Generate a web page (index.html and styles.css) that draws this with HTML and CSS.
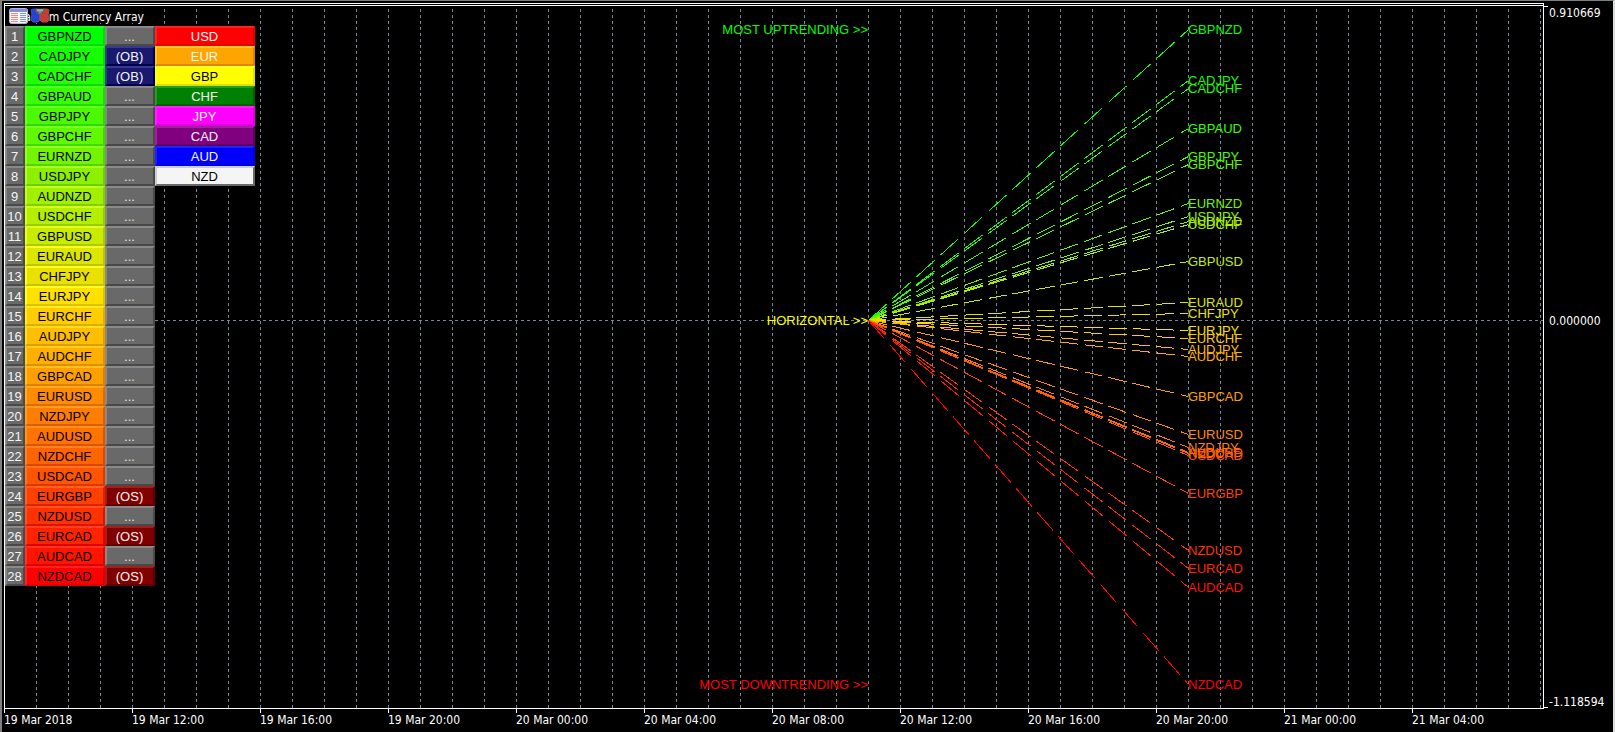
FILE: index.html
```html
<!DOCTYPE html>
<html lang="en">
<head>
    <meta charset="UTF-8">
    <meta name="viewport" content="width=device-width, initial-scale=1.0">
    <title>Quantum Currency Array</title>
    <link rel="stylesheet" href="styles.css">
</head>
<body>
    <main class="plot">
        <svg id="chart" class="chart"></svg>

        <div class="panel">
            <div class="title-bar">
                <h1>Quantum Currency Array</h1>
                <svg class="icon icon-list" width="19" height="16" viewBox="0 0 19 16">
                    <rect x="0.5" y="0.5" width="18" height="15" rx="2" fill="#f4f4fa" stroke="#b4b4cc"/>
                    <rect x="1" y="1" width="17" height="3" fill="#7f8fdc"/>
                    <path d="M2 5.5h7M2 7.5h7M2 9.5h7M2 11.5h7M2 13.5h7" stroke="#f08a78"/>
                    <path d="M11 5.5h6M11 7.5h6M11 9.5h6M11 11.5h6M11 13.5h6" stroke="#7f95ea"/>
                </svg>
                <svg class="icon icon-link" width="20" height="16" viewBox="0 0 20 16">
                    <path d="M1 2l2-1h4v5h3v6l-2 2H3l-2-2 1-5z" fill="#2741d8" stroke="#3c55c8"/>
                    <path d="M19 2l-2-1h-4v5h-3v6l2 2h5l2-2-1-5z" fill="#c83c32" stroke="#b84a42"/>
                    <path d="M6 1h8v3h-2v2H8V4H6z" fill="#8c8c8c" stroke="#5c5c5c"/>
                    <path d="M7 2h6" stroke="#c8c8c8"/>
                </svg>
            </div>
            <div class="columns">
                <div id="pairs" class="pairs"></div>
                <div id="currencies" class="currencies"></div>
            </div>
        </div>
    </main>

    <aside class="price-axis">
        <span>0.910669</span>
        <span>0.000000</span>
        <span>-1.118594</span>
    </aside>

    <footer class="time-axis">
        <span>19 Mar 2018</span>
        <span>19 Mar 12:00</span>
        <span>19 Mar 16:00</span>
        <span>19 Mar 20:00</span>
        <span>20 Mar 00:00</span>
        <span>20 Mar 04:00</span>
        <span>20 Mar 08:00</span>
        <span>20 Mar 12:00</span>
        <span>20 Mar 16:00</span>
        <span>20 Mar 20:00</span>
        <span>21 Mar 00:00</span>
        <span>21 Mar 04:00</span>
    </footer>

    <script src="script.js"></script>
</body>
</html>
```

FILE: styles.css
```css
* {
    box-sizing: border-box;
}

body {
    display: grid;
    grid-template-columns: 1fr 69px;
    grid-template-rows: 1fr 23px;
    min-height: 100vh;
    margin: 0;
    padding: 2px 0 0 2px;
    border: 0 solid #808080;
    border-width: 1px 2px 0 2px;
    border-right-color: #dcdcdc;
    background-color: black;
    color: white;
    font-family: "DejaVu Sans Condensed", "DejaVu Sans", sans-serif;
    font-size: 12px;
}

.plot {
    position: relative;
    min-height: 590px;
    border: 1px solid white;
    border-top: 3px double white;
}

.chart {
    position: absolute;
    width: 100%;
    height: 100%;
    font-family: "Liberation Sans", Arial, sans-serif;
    font-size: 13px;
}

.grid-line {
    stroke: #778899;
    stroke-dasharray: 3 3;
    shape-rendering: crispEdges;
}

.trend-line {
    shape-rendering: crispEdges;
}

.note {
    text-anchor: end;
}

/* button panel, drawn over the chart */
.panel {
    position: relative;
    width: 250px;
}

.title-bar {
    width: 150px;
    height: 17px;
    margin-bottom: 3px;
    background-color: black;
}

h1 {
    margin: 0;
    padding: 3px 0 0 4px;
    font-size: 12px;
    font-weight: normal;
    line-height: 17px;
    white-space: nowrap;
}

.icon {
    position: absolute;
    top: 2px;
}

.icon-list {
    left: 4px;
}

.icon-link {
    left: 25px;
}

.columns {
    display: flex;
    align-items: flex-start;
}

.pairs {
    display: grid;
    grid-template-columns: 20px 80px 50px;
}

.currencies {
    display: grid;
    width: 100px;
}

button {
    height: 20px;
    margin: 0;
    padding: 2px 1px 0 0;
    border: 2px solid;
    border-radius: 0;
    font-family: "Liberation Sans", Arial, sans-serif;
    font-size: 13px;
    line-height: 14px;
    text-align: center;
}

/* axes */
.price-axis {
    display: grid;
    grid-template-rows: 14px 4fr 14px 5fr 14px;
    margin-top: 3px;
    padding-left: 5px;
    line-height: 14px;
    background: linear-gradient(white, white) 0 0 / 4px 1px no-repeat,
                linear-gradient(white, white) 0 calc(100% - 1px) / 4px 1px no-repeat;
}

.price-axis span:nth-child(2) {
    grid-row: 3;
}

.price-axis span:nth-child(3) {
    grid-row: 5;
}

.time-axis {
    display: flex;
    grid-column: 1 / 3;
    overflow: hidden;
}

.time-axis span {
    flex: 0 0 128px;
    line-height: 22px;
    background: linear-gradient(white, white) 0 0 / 1px 4px no-repeat;
}
```

FILE: script.js
```js
const MAX = 0.910669;
const MIN = -1.118594;
const BAR = 32;
const START_BAR = 27;
const END_BAR = 37;

// pair, value, colour, state
const pairs = [
    ["GBPNZD", 0.842, "#00ff00", ""],
    ["CADJPY", 0.695, "#14ff00", "OB"],
    ["CADCHF", 0.672, "#23ff00", "OB"],
    ["GBPAUD", 0.556, "#37ff00", ""],
    ["GBPJPY", 0.475, "#4bfa00", ""],
    ["GBPCHF", 0.452, "#5ffa00", ""],
    ["EURNZD", 0.339, "#73f500", ""],
    ["USDJPY", 0.301, "#8cf000", ""],
    ["AUDNZD", 0.287, "#a0f000", ""],
    ["USDCHF", 0.278, "#b4ee00", ""],
    ["GBPUSD", 0.171, "#c8eb00", ""],
    ["EURAUD", 0.052, "#dce600", ""],
    ["CHFJPY", 0.020, "#ebe100", ""],
    ["EURJPY", -0.029, "#ffe100", ""],
    ["EURCHF", -0.052, "#ffcd00", ""],
    ["AUDJPY", -0.084, "#ffbe00", ""],
    ["AUDCHF", -0.105, "#ffaf00", ""],
    ["GBPCAD", -0.220, "#ffa000", ""],
    ["EURUSD", -0.330, "#ff8c00", ""],
    ["NZDJPY", -0.368, "#ff7d00", ""],
    ["AUDUSD", -0.382, "#ff7300", ""],
    ["NZDCHF", -0.385, "#ff6400", ""],
    ["USDCAD", -0.391, "#ff5500", ""],
    ["EURGBP", -0.501, "#ff4100", "OS"],
    ["NZDUSD", -0.666, "#ff3200", ""],
    ["EURCAD", -0.718, "#ff2300", "OS"],
    ["AUDCAD", -0.773, "#ff1400", ""],
    ["NZDCAD", -1.054, "#ff0000", "OS"]
];

const currencies = [
    ["USD", "#ff0000", "#f5f5f5"],
    ["EUR", "#ffa500", "#f5f5f5"],
    ["GBP", "#ffff00", "#000000"],
    ["CHF", "#008000", "#f5f5f5"],
    ["JPY", "#ff00ff", "#f5f5f5"],
    ["CAD", "#800080", "#f5f5f5"],
    ["AUD", "#0000ff", "#f5f5f5"],
    ["NZD", "#f5f5f5", "#000000"]
];

function shade(hex, amount) {
    const parts = [1, 3, 5].map(i => parseInt(hex.substr(i, 2), 16) + amount);
    return "rgb(" + parts.map(p => Math.max(0, Math.min(255, p))).join(",") + ")";
}

function addButton(parent, text, back, color) {
    const button = document.createElement("button");
    let light = shade(back, 32);
    let dark = shade(back, -32);
    if (back === "#f5f5f5") {
        light = "#cdcdcd";
        dark = "#696969";
    }
    button.type = "button";
    button.textContent = text;
    button.style.backgroundColor = back;
    button.style.color = color;
    button.style.borderColor = light + " " + dark + " " + dark + " " + light;
    parent.appendChild(button);
}

function buildPanel() {
    const list = document.getElementById("pairs");
    pairs.forEach(([name, value, color, state], i) => {
        addButton(list, i + 1, "#696969", "#f5f5f5");
        addButton(list, name, color, "#000000");
        if (state === "OB") {
            addButton(list, "(OB)", "#191970", "#f5f5f5");
        } else if (state === "OS") {
            addButton(list, "(OS)", "#800000", "#f5f5f5");
        } else {
            addButton(list, "...", "#696969", "#ffe4c4");
        }
    });

    const side = document.getElementById("currencies");
    currencies.forEach(([name, back, color]) => addButton(side, name, back, color));
}

function addShape(tag, attrs, text) {
    const el = document.createElementNS("http://www.w3.org/2000/svg", tag);
    for (const key in attrs) {
        el.setAttribute(key, attrs[key]);
    }
    if (text) {
        el.textContent = text;
    }
    document.getElementById("chart").appendChild(el);
}

function drawChart() {
    const chart = document.getElementById("chart");
    const width = chart.clientWidth;
    const height = chart.clientHeight;
    const yOf = value => Math.floor((MAX - value) / (MAX - MIN) * (height - 1)) + 0.5;
    const xOf = bar => bar * BAR - 0.5;

    chart.innerHTML = "";

    for (let bar = 1; xOf(bar) < width; bar++) {
        addShape("line", { class: "grid-line", x1: xOf(bar), x2: xOf(bar), y1: 3, y2: height });
    }
    addShape("line", { class: "grid-line", x1: 0, x2: width, y1: yOf(0), y2: yOf(0) });

    const x1 = xOf(START_BAR);
    const x2 = xOf(END_BAR);
    const y1 = yOf(0);
    const textY = value => Math.floor(yOf(value)) + 5;

    pairs.forEach(([name, value, color]) => {
        const y2 = yOf(value);
        const dx = x2 - x1;
        const dy = Math.abs(y2 - y1);
        // dash length is counted along the longer side of the line
        const k = Math.hypot(dx, dy) / Math.max(dx, dy);
        addShape("line", {
            class: "trend-line", x1: x1, y1: y1, x2: x2, y2: y2,
            stroke: color, "stroke-dasharray": 18 * k + " " + 6 * k
        });
        addShape("text", { x: Math.floor(x2), y: textY(value), fill: color }, name);
    });

    const noteX = Math.floor(x1);
    addShape("text", { class: "note", x: noteX, y: textY(pairs[0][1]), fill: "#00ff00" }, "MOST UPTRENDING >>");
    addShape("text", { class: "note", x: noteX, y: textY(0), fill: "#ffff00" }, "HORIZONTAL >>");
    addShape("text", { class: "note", x: noteX, y: textY(pairs[27][1]), fill: "#ff0000" }, "MOST DOWNTRENDING >>");
}

buildPanel();
drawChart();
window.addEventListener("resize", drawChart);
```
